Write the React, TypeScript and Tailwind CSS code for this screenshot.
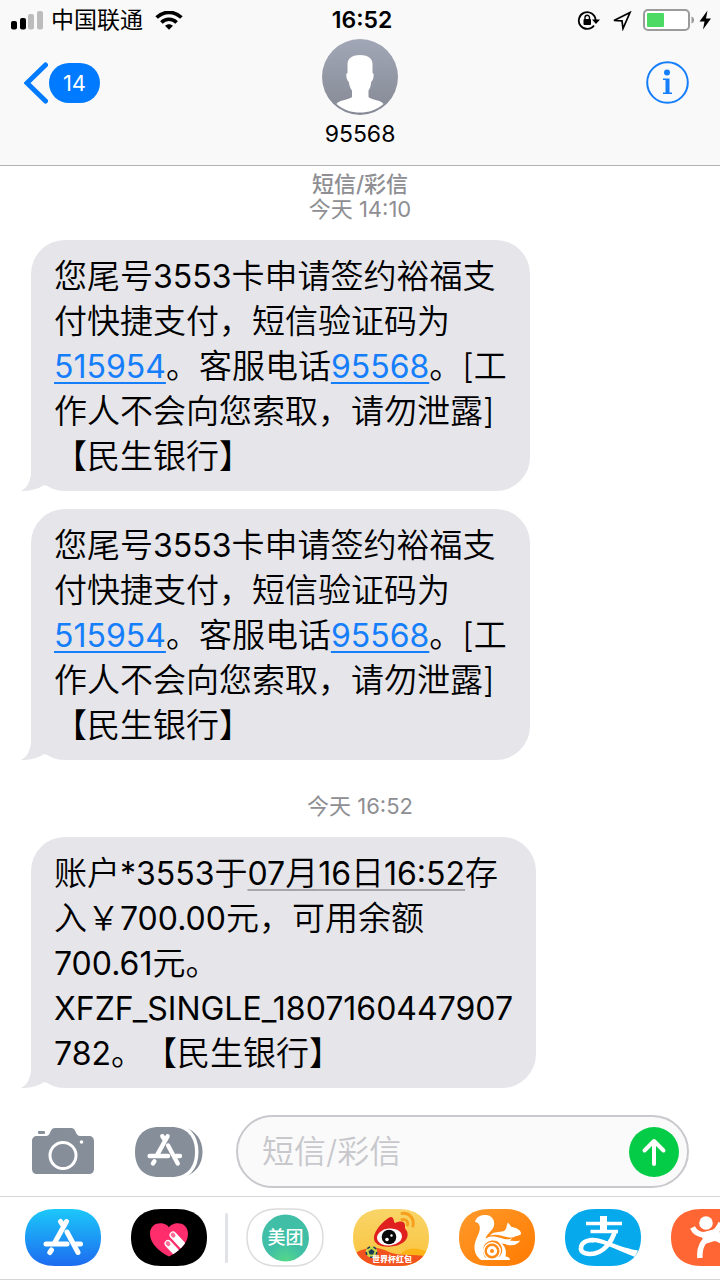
import { useState } from 'react';
import type { ReactNode } from 'react';

const PILL =
  'M30 0H46C66 0 76 12 76 28.5C76 45 66 57 46 57H30C10 57 0 45 0 28.5C0 12 10 0 30 0Z';

function SignalIcon() {
  return (
    <svg className="w-8 h-5" viewBox="0 0 32 20">
      <rect x="0" y="10" width="6" height="8.500" rx="2" fill="#000" />
      <rect x="9" y="7" width="6" height="11.500" rx="2" fill="#000" />
      <rect x="17" y="3" width="6" height="15.500" rx="2" fill="#bcbcbc" />
      <rect x="26" y="0" width="6" height="18.500" rx="2" fill="#bcbcbc" />
    </svg>
  );
}

function WifiIcon() {
  return (
    <svg className="w-7 h-5" viewBox="0 0 28 20">
      <g fill="none" stroke="#000" strokeWidth="3.6">
        <path d="M1.600 6.600C8.500 -0.400 19.500 -0.400 26.400 6.600" />
        <path d="M6.400 11.400C10.600 7.200 17.400 7.200 21.600 11.400" />
      </g>
      <path d="M10 14.800C12.300 12.700 15.700 12.700 18 14.800L14 18.800Z" />
    </svg>
  );
}

function RotationLockIcon() {
  return (
    <svg className="w-6 h-5" viewBox="0 0 24 20">
      <path
        d="M17 14.500A8.400 8.400 0 1 1 18.600 9"
        fill="none"
        stroke="#000"
        strokeWidth="1.800"
      />
      <path d="M15 8.500H23L19 13Z" />
      <rect x="6.500" y="8" width="7.500" height="6" rx="1" />
      <path d="M8 8.500V6.500A2.200 2.200 0 0 1 12.500 6.500V8.500" fill="none" stroke="#000" strokeWidth="1.400" />
    </svg>
  );
}

function LocationIcon() {
  return (
    <svg className="w-5 h-5" viewBox="0 0 20 20">
      <path
        d="M2 9.500L18 1.500L11 17.500L10 9.800Z"
        fill="none"
        stroke="#000"
        strokeWidth="1.700"
      />
    </svg>
  );
}

function BatteryIcon() {
  return (
    <svg className="w-[70px] h-6" viewBox="0 0 70 24">
      <rect x="1" y="1" width="45" height="20" rx="4" fill="#fff" stroke="#9b9b9b" strokeWidth="2" />
      <rect x="4" y="4" width="17" height="14" rx="1" fill="#4cd964" />
      <path d="M48.500 7.500C52 8.500 52 13.500 48.500 14.500Z" fill="#9b9b9b" />
      <path d="M64.500 1.500L56.500 12.500H61.500L60 20.500L68 9.500H63Z" />
    </svg>
  );
}

function ContactAvatar() {
  return (
    <svg className="w-[76px] h-[76px]" viewBox="0 0 76 76">
      <defs>
        <linearGradient id="avatar" x1="0" y1="0" x2="0" y2="1">
          <stop offset="0" stopColor="#a2a7b7" />
          <stop offset="1" stopColor="#858994" />
        </linearGradient>
      </defs>
      <circle cx="38" cy="38" r="38" fill="url(#avatar)" />
      <path
        fill="#fff"
        d="M38 16C31 16 25.500 19 25.500 25V34C24 34 24 37 25 40C25.500 42 26.500 42 26.800 43C27.400 47 28.600 50 30 51.500V58C27 61 16 61 14.500 65C21 71 29.500 73.500 38 73.500C46.500 73.500 55 71 61.500 65C60 61 49 61 46.500 58V51.500C48 50 48.700 47 49.200 43C50 42 50.500 41.500 51 40C52 37 52 34 50.500 34V25C50.500 19 45 16 38 16Z"
      />
    </svg>
  );
}

function StoreMark() {
  return (
    <g fill="none" stroke="#fff" strokeWidth="5" strokeLinecap="round">
      <path d="M41.500 12.500L29.500 34" />
      <path d="M35.500 12.500L38.500 17" />
      <path d="M21 35H42" />
      <path d="M51 35H55.500" />
      <path d="M42 23L53 43.500" />
      <path d="M26.500 41L24.800 43.500" />
    </g>
  );
}

function CameraIcon() {
  return (
    <svg className="w-[62px] h-[50px]" viewBox="0 0 62 50">
      <path
        fill="#868e99"
        d="M5 9H13C17 9 17.500 7 18.500 4.500C19.500 2 21 1 23 1H39C41 1 42.500 2 43.500 4.500C44.500 7 45.500 9 49 9H57C60 9 62 11 62 14V42C62 45 60 47 57 47H5C2 47 0 45 0 42V14C0 11 2 9 5 9Z"
      />
      <rect x="6" y="4" width="7" height="3" rx="1" fill="#868e99" />
      <circle cx="31" cy="28.500" r="13" fill="none" stroke="#fff" strokeWidth="3" />
      <circle cx="49.500" cy="15" r="1.800" fill="#fff" />
    </svg>
  );
}

function AppDrawerIcon() {
  return (
    <svg className="w-[68px] h-[50px]" viewBox="0 0 68 50">
      <path
        fill="#868e99"
        d="M46 0.500H50C61 4 67.500 13 67.500 25C67.500 37 61 46 50 49.500H46Z"
      />
      <path
        fill="#868e99"
        stroke="#fff"
        strokeWidth="7"
        paintOrder="stroke"
        d="M24 0H36C52 0 60 10 60 25C60 40 52 50 36 50H24C8 50 0 40 0 25C0 10 8 0 24 0Z"
      />
      <g transform="translate(-3.900 -1.800) scale(0.880)">
        <StoreMark />
      </g>
    </svg>
  );
}

function StoreApp() {
  return (
    <>
      <defs>
        <linearGradient id="store" x1="0" y1="0" x2="0" y2="1">
          <stop offset="0" stopColor="#1cc8fa" />
          <stop offset="1" stopColor="#1d6bf0" />
        </linearGradient>
      </defs>
      <path d={PILL} fill="url(#store)" />
      <StoreMark />
    </>
  );
}

function TouchApp() {
  return (
    <>
      <defs>
        <clipPath id="heart">
          <path d="M38 18.500C35 12.500 19 11.500 19 25C19 35 29 43 38 47.500C47 43 57 35 57 25C57 11.500 41 12.500 38 18.500Z" />
        </clipPath>
      </defs>
      <path d={PILL} />
      <g clipPath="url(#heart)">
        <rect width="76" height="57" fill="#ff2d6b" />
        <g stroke="#fff" strokeWidth="7" strokeLinecap="round">
          <path d="M42 26L56 41" />
          <path d="M37 34.500L51 49.500" />
        </g>
        <g stroke="#fb6d95" strokeWidth="4" strokeLinecap="round">
          <path d="M41.700 25.700L42.500 26.600" />
          <path d="M36.700 34.200L37.500 35.100" />
        </g>
      </g>
    </>
  );
}

function MeituanApp() {
  return (
    <>
      <defs>
        <radialGradient id="meituan" cx="0.5" cy="1" r="0.4">
          <stop offset="0" stopColor="#55d888" />
          <stop offset="1" stopColor="#40bfa6" />
        </radialGradient>
      </defs>
      <path d={PILL} fill="#fff" stroke="#dcdcdc" strokeWidth="1.500" />
      <circle cx="38.500" cy="29" r="23.500" fill="url(#meituan)" />
      <text
        x="38.500"
        y="35"
        textAnchor="middle"
        fill="#fff"
        className="text-[18px] font-medium font-['Noto_Sans_CJK_SC',sans-serif]"
      >
        美团
      </text>
    </>
  );
}

function WeiboApp() {
  return (
    <>
      <defs>
        <clipPath id="weibo">
          <path d={PILL} />
        </clipPath>
        <linearGradient id="weiboBg" x1="0" y1="0" x2="0" y2="1">
          <stop offset="0" stopColor="#f8d568" />
          <stop offset="1" stopColor="#fbc23c" />
        </linearGradient>
      </defs>
      <g clipPath="url(#weibo)">
        <rect width="76" height="57" fill="url(#weiboBg)" />
        <path d="M46 48C50 38 65 37 76 44V57H46Z" fill="#fbb318" />
        <path d="M0 46C14 36 26 38 36 43C48 48 58 44 76 48V57H0Z" fill="#f2521f" />
        <path
          d="M38 8C33 9 22 20 21 28C20 36 30 38.500 38 37.500C48 37 56 31 54.500 24C54 20.500 51.500 21 52 17C52.500 12 46.500 11.500 42.500 14C40.500 15 41.500 8 38 8Z"
          fill="#e0201f"
        />
        <ellipse cx="36.500" cy="28" rx="12.500" ry="8.500" fill="#fff" transform="rotate(-6 36.500 28)" />
        <circle cx="36" cy="28" r="7.300" fill="#0a0a0a" />
        <circle cx="34" cy="30.500" r="1.800" fill="#fff" />
        <circle cx="38.500" cy="26.500" r="1.200" fill="#fff" />
        <g fill="none" stroke="#f7a01e" strokeWidth="3" strokeLinecap="round">
          <path d="M49 4.500C56 3.500 61.500 9 60 17" />
          <path d="M49 10.500C53 10 55.500 12.500 54.500 16" />
        </g>
        <circle cx="18.500" cy="43" r="5.800" fill="#c9d64a" />
        <path d="M18.500 40L21.500 42.200L20.300 45.500H16.700L15.500 42.200Z" fill="#1b3e52" />
        <circle cx="18.500" cy="43" r="5.300" fill="none" stroke="#1b3e52" strokeWidth="1.600" strokeDasharray="3 3.600" />
        <text
          x="39"
          y="53"
          textAnchor="middle"
          fill="#fff"
          className="text-[8px] font-black font-['Noto_Sans_CJK_SC',sans-serif]"
        >
          世界杯红包
        </text>
      </g>
    </>
  );
}

function BrowserApp() {
  return (
    <>
      <defs>
        <linearGradient id="browser" x1="0" y1="0" x2="1" y2="1">
          <stop offset="0" stopColor="#ff9a2b" />
          <stop offset="1" stopColor="#ff7a00" />
        </linearGradient>
      </defs>
      <path d={PILL} fill="url(#browser)" />
      <g fill="#fff">
        <path d="M16 13C17 8 22 5.500 27 6C33 6.500 36 11 35 16.500C34 22 28 24 26.500 29.500C31 26.500 36 27 42 29C46 30.500 50 31 53 29C50 34 46 35.500 42 34.500C36 29.500 27 31 24.500 38C23 43 25 48 28 51H22C16 47 14.500 40 16 34C18 27 22 22 20.500 16.500C19.500 13.500 17.500 13 16 13Z" />
        <path d="M49 13.500L52.500 18C57 18.500 62 21 62 24.500C62 26.500 58 26.500 56 27.500C53 29.500 47 28 42 26.500C38 25.300 34 25.500 31 26.500C35 21.500 40 24 45 22C48 20.500 47 17 49 13.500Z" />
        <path d="M40 29.500C48 31 54 33 61 31.500C58 37 51 37 47 35.500C45 34 43 31.500 40 29.500Z" />
        <path d="M38 32C46 35 48 41 46.500 47.500C49 47.500 51 49 51 51H23L28 48H40C45 44 44 36 38 32Z" />
        <circle cx="33" cy="42" r="9" />
      </g>
      <circle cx="33" cy="42" r="6.300" fill="none" stroke="#ff8a15" strokeWidth="2.400" />
      <circle cx="33" cy="42" r="2" fill="#ff8a15" />
    </>
  );
}

function AlipayApp() {
  return (
    <>
      <defs>
        <clipPath id="alipay">
          <path d={PILL} />
        </clipPath>
      </defs>
      <g clipPath="url(#alipay)">
        <rect width="76" height="57" fill="#06a9ec" />
        <g fill="none" stroke="#fff">
          <path d="M21 14.500H57M25.500 22.500H53" strokeWidth="3.400" />
          <path d="M38.500 7V22" strokeWidth="7" />
          <path
            d="M50 22C47 32 39 45 25 45C18 45 15.500 42 16 38.500C16.500 33.500 22 30.500 29 31.500"
            strokeWidth="4.600"
          />
        </g>
        <path
          d="M24 29C32 27.500 39 31 47 34C56 37.500 66 40.500 73 41.500L70 48C60 44 50 39.500 42 36.500C35 34 30 32.500 24 33Z"
          fill="#fff"
        />
      </g>
    </>
  );
}

function DianpingApp() {
  return (
    <>
      <path d={PILL} fill="#ff6633" />
      <circle cx="35" cy="14" r="6.800" fill="#fff" />
      <g fill="none" stroke="#fff" strokeWidth="5.500">
        <path d="M21.500 18.500C25 25.500 32 27 40 25C45 23 48 19 50 14" />
        <path d="M29 49C28 39 32 30 40 29C50 28 56 36 58 46" />
      </g>
      <path d="M29 24L48 19L50 30L34 35Z" fill="#fff" />
    </>
  );
}

interface AppButtonProps {
  label: string;
  children: ReactNode;
}

function AppButton({ label, children }: AppButtonProps) {
  return (
    <button aria-label={label} className="shrink-0">
      <svg className="w-[76px] h-[57px] overflow-visible" viewBox="0 0 76 57">
        {children}
      </svg>
    </button>
  );
}

function Bubble({ children }: { children: ReactNode }) {
  return (
    <div className="relative w-fit rounded-[34px] bg-[#e5e5ea] px-[23px] pt-[14px] pb-3 text-[33px] leading-[45px] whitespace-nowrap">
      <svg
        className="absolute bottom-0 -left-[10px] w-[34px] h-[34px]"
        viewBox="0 0 34 34"
      >
        <path d="M10 0V17C9 25 6 31 0 34C9 34 17 32 23 28L34 31V0Z" fill="#e5e5ea" />
      </svg>
      <p className="relative font-[350] [text-spacing-trim:space-all]">{children}</p>
    </div>
  );
}

// digits and latin letters sit slightly smaller than the hanzi around them
function Latin({ children }: { children: ReactNode }) {
  return <span className="text-[32px] font-normal">{children}</span>;
}

function DetectedLink({ children }: { children: string }) {
  return (
    <a
      href={`tel:${children}`}
      className="text-[32px] font-normal text-[#157efb] underline decoration-2 underline-offset-4"
    >
      {children}
    </a>
  );
}

function VerificationMessage() {
  return (
    <Bubble>
      您尾号<Latin>3553</Latin>卡申请签约裕福支
      <br />
      付快捷支付，短信验证码为
      <br />
      <DetectedLink>515954</DetectedLink>。客服电话
      <DetectedLink>95568</DetectedLink>。[工
      <br />
      作人不会向您索取，请勿泄露]
      <br />
      【民生银行】
    </Bubble>
  );
}

export default function App() {
  const [draft, setDraft] = useState('');

  return (
    <div
      lang="zh-CN"
      className="flex min-h-screen flex-col overflow-x-hidden bg-white text-black font-[Inter,'Noto_Sans_CJK_SC',sans-serif]"
    >
      <header className="border-b border-[#b2b2b2] bg-[#f9f9f9]">
        <div className="grid h-[39px] grid-cols-3 items-center pl-[11px] pr-[7px] pt-[2px]">
          <div className="flex items-center gap-2 text-[23px]">
            <SignalIcon />
            <span>中国联通</span>
            <span className="pl-1">
              <WifiIcon />
            </span>
          </div>
          <span className="text-center text-[23px] font-semibold">16:52</span>
          <div className="flex items-center justify-end gap-[11px]">
            <RotationLockIcon />
            <LocationIcon />
            <BatteryIcon />
          </div>
        </div>
        <div className="grid h-[126px] grid-cols-3 items-start px-6">
          <button aria-label="返回" className="mt-[23px] flex items-center gap-px">
            <svg className="w-6 h-[42px]" viewBox="0 0 24 42">
              <path
                d="M21.500 3L3 21L21.500 39"
                fill="none"
                stroke="#007aff"
                strokeWidth="5"
                strokeLinecap="round"
              />
            </svg>
            <span className="flex h-10 w-[51px] items-center justify-center rounded-full bg-[#007aff] text-[22px] text-white">
              14
            </span>
          </button>
          <div className="flex flex-col items-center">
            <ContactAvatar />
            <h1 className="mt-1 text-[23px] leading-[30px]">95568</h1>
          </div>
          <button
            aria-label="详细信息"
            className="mt-[22px] mr-[7px] flex size-[43px] justify-self-end"
          >
            <svg className="size-full" viewBox="0 0 43 43">
              <circle cx="21.500" cy="21.500" r="20.300" fill="none" stroke="#157efb" strokeWidth="2" />
              <circle cx="21" cy="11.500" r="3" fill="#157efb" />
              <path d="M17 17.500H23.500V31.500H26V33H17V31.500H19.500V19H17Z" fill="#157efb" />
            </svg>
          </button>
        </div>
      </header>

      <main className="flex-1 pl-[31px] pt-[6px]">
        <div className="-ml-[31px] mb-[18px] text-center text-[22px] leading-[25px] text-[#8e8e93]">
          <p className="font-medium">短信/彩信</p>
          <p>今天 14:10</p>
        </div>
        <div className="flex flex-col gap-[18px]">
          <VerificationMessage />
          <VerificationMessage />
        </div>
        <p className="-ml-[31px] mb-[18px] mt-[34px] text-center text-[22px] leading-[25px] text-[#8e8e93]">
          今天 16:52
        </p>
        <Bubble>
          账户<Latin>*3553</Latin>于
          <span className="underline decoration-[#a5a5aa] decoration-2 underline-offset-4">
            <Latin>07</Latin>月<Latin>16</Latin>日<Latin>16:52</Latin>
          </span>
          存
          <br />
          入￥<Latin>700.00</Latin>元，可用余额
          <br />
          <Latin>700.61</Latin>元。
          <br />
          <Latin>XFZF_SINGLE_1807160447907</Latin>
          <br />
          <Latin>782</Latin>。【民生银行】
        </Bubble>
      </main>

      <footer>
        <form
          className="mt-[27px] mb-2 flex items-center pl-8 pr-[31px]"
          onSubmit={e => e.preventDefault()}
        >
          <button type="button" aria-label="相机">
            <CameraIcon />
          </button>
          <button type="button" aria-label="App" className="ml-[41px]">
            <AppDrawerIcon />
          </button>
          <div className="ml-[33px] flex h-[73px] min-w-0 flex-1 items-center rounded-full border-2 border-[#c8c8cd] bg-[#fafafa] pl-6 pr-2">
            <input
              aria-label="短信/彩信"
              placeholder="短信/彩信"
              value={draft}
              onChange={e => setDraft(e.target.value)}
              className="min-w-0 flex-1 bg-transparent text-[32px] font-[350] outline-none placeholder:text-[#c7c7cc]"
            />
            <button aria-label="发送" className="size-[50px] shrink-0 rounded-full bg-[#04cc47]">
              <svg viewBox="0 0 50 50">
                <path
                  d="M25 37V14M15.500 23.500L25 14L34.500 23.500"
                  fill="none"
                  stroke="#fff"
                  strokeWidth="4"
                  strokeLinecap="round"
                  strokeLinejoin="round"
                />
              </svg>
            </button>
          </div>
        </form>
        <nav className="flex items-center overflow-hidden border-y border-[#d6d6d9] pb-[13px] pl-[25px] pt-3">
          <div className="flex gap-[30px]">
            <AppButton label="App Store">
              <StoreApp />
            </AppButton>
            <AppButton label="Digital Touch">
              <TouchApp />
            </AppButton>
          </div>
          <div className="ml-[18px] mr-[19px] h-[50px] w-[3px] shrink-0 rounded-full bg-[#e1e1e8]" />
          <div className="flex gap-[30px]">
            <AppButton label="美团">
              <MeituanApp />
            </AppButton>
            <AppButton label="微博">
              <WeiboApp />
            </AppButton>
            <AppButton label="UC">
              <BrowserApp />
            </AppButton>
            <AppButton label="支付宝">
              <AlipayApp />
            </AppButton>
            <AppButton label="大众点评">
              <DianpingApp />
            </AppButton>
          </div>
        </nav>
      </footer>
    </div>
  );
}
